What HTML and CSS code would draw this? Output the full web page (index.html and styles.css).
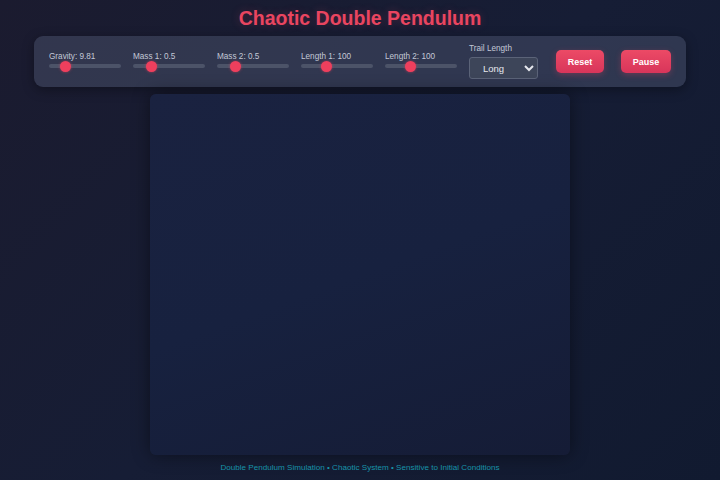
FILE: index.html
```html
<!DOCTYPE html>
<html>
<head>
<meta charset="utf-8">
<link rel="stylesheet" href="styles.css">
</head>
<body>
<h1 class="title">Chaotic Double Pendulum</h1>
<div class="panel">
  <div class="group">
    <label class="lbl">Gravity: 9.81</label>
    <input class="slider" type="range" min="1" max="50" step="0.01" value="9.81">
  </div>
  <div class="group">
    <label class="lbl">Mass 1: 0.5</label>
    <input class="slider" type="range" min="0.1" max="2" step="0.1" value="0.5">
  </div>
  <div class="group">
    <label class="lbl">Mass 2: 0.5</label>
    <input class="slider" type="range" min="0.1" max="2" step="0.1" value="0.5">
  </div>
  <div class="group">
    <label class="lbl">Length 1: 100</label>
    <input class="slider" type="range" min="50" max="200" value="100">
  </div>
  <div class="group">
    <label class="lbl">Length 2: 100</label>
    <input class="slider" type="range" min="50" max="200" value="100">
  </div>
  <div class="group trail">
    <label class="lbl">Trail Length</label>
    <select class="sel">
      <option>Short</option>
      <option>Medium</option>
      <option selected>Long</option>
    </select>
  </div>
  <button class="btn reset">Reset</button>
  <button class="btn pause">Pause</button>
</div>
<div class="canvas"></div>
<p class="footer">Double Pendulum Simulation • Chaotic System • Sensitive to Initial Conditions</p>
</body>
</html>
```
FILE: styles.css
```css
html, body {
  margin: 0;
  height: 100%;
}
body {
  width: 720px;
  height: 480px;
  overflow: hidden;
  background: linear-gradient(135deg, #1b1b2f 0%, #161d35 50%, #111a30 100%);
  font-family: "Liberation Sans", Arial, sans-serif;
  padding-top: 6px;
  box-sizing: border-box;
  display: flex;
  flex-direction: column;
  align-items: center;
}
.title {
  margin: 0 0 6px;
  font-size: 19.5px;
  line-height: 24px;
  font-weight: bold;
  color: #e94560;
  text-shadow: 0 0 8px rgba(233, 69, 96, 0.25);
}
.panel {
  width: 652px;
  height: 51px;
  box-sizing: border-box;
  padding: 0 15px;
  background: rgba(80, 88, 115, 0.45);
  border-radius: 9px;
  box-shadow: 0 3px 12px rgba(0, 0, 0, 0.35);
  display: flex;
  align-items: center;
  gap: 12px;
}
.group {
  width: 72px;
  display: flex;
  flex-direction: column;
  gap: 2px;
  margin-bottom: 3px;
}
.trail {
  width: 69px;
  gap: 3px;
  margin-bottom: 0;
}
.lbl {
  font-size: 8.2px;
  line-height: 10px;
  color: #c3c8d6;
  white-space: nowrap;
}
.slider {
  -webkit-appearance: none;
  appearance: none;
  width: 72px;
  height: 4px;
  margin: 0;
  border-radius: 2px;
  background: #4c5368;
  outline: none;
}
.slider::-webkit-slider-thumb {
  -webkit-appearance: none;
  width: 11px;
  height: 11px;
  border-radius: 50%;
  background: #ee3f5d;
  box-shadow: 0 0 3px rgba(233, 69, 96, 0.6);
  border: none;
}
.sel {
  width: 69px;
  height: 22px;
  margin: 0;
  background: #3d4559;
  color: #e6e8ee;
  border: 1px solid #5b6378;
  border-radius: 3px;
  font-family: "Liberation Sans", Arial, sans-serif;
  font-size: 9.5px;
  padding: 0 0 0 9px;
}
.btn {
  height: 23px;
  border: none;
  border-radius: 5px;
  background: linear-gradient(180deg, #ec4a66 0%, #d8355a 100%);
  color: #ffffff;
  font-family: "Liberation Sans", Arial, sans-serif;
  font-size: 9px;
  font-weight: bold;
  box-shadow: 0 2px 6px rgba(233, 69, 96, 0.3);
  padding: 0;
}
.reset {
  width: 48px;
  margin-left: 6px;
}
.pause {
  width: 50px;
  margin-left: 5px;
}
.canvas {
  margin-top: 7px;
  width: 420px;
  height: 361px;
  border-radius: 6px;
  background: linear-gradient(160deg, #1a2240 0%, #17213f 50%, #151c36 100%);
  box-shadow: 0 0 18px rgba(0, 0, 0, 0.45);
}
.footer {
  margin: 8px 0 0;
  font-size: 8.1px;
  line-height: 10px;
  color: #1793a8;
}
```
